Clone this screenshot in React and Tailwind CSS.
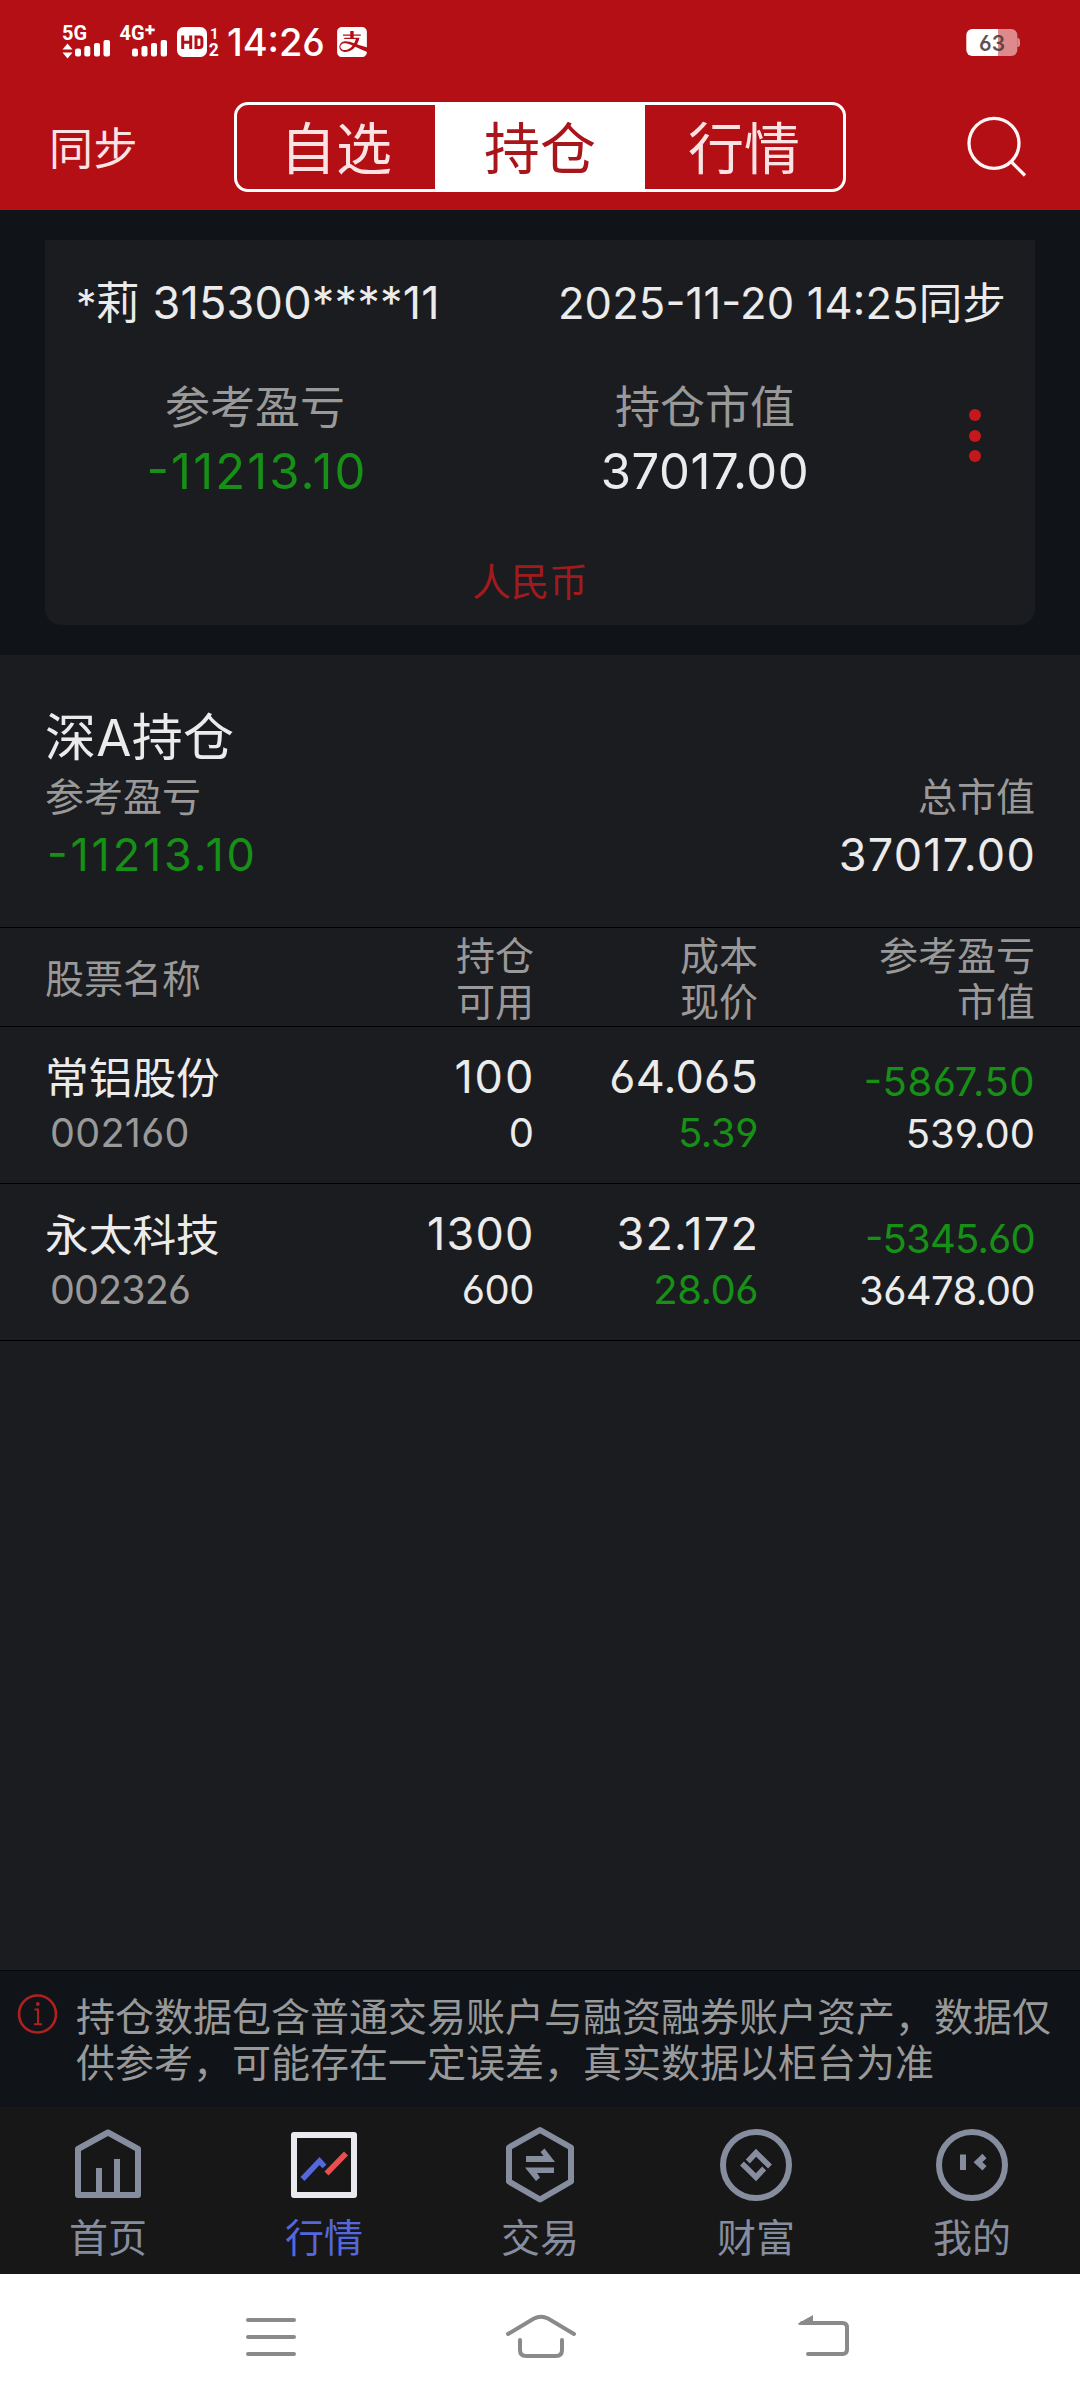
import { SiAlipay } from "react-icons/si";

const holdings = [
  {
    name: "常铝股份",
    code: "002160",
    codeClass: "tracking-[0.3px]",
    amount: "100",
    amountClass: "tracking-[1.9px] -mr-[1.2px]",
    usable: "0",
    usableClass: "",
    cost: "64.065",
    costClass: "tracking-[0.2px]",
    price: "5.39",
    priceClass: "tracking-[-0.4px]",
    profit: "-5867.50",
    profitClass: "tracking-[0.5px]",
    value: "539.00",
    valueClass: "",
  },
  {
    name: "永太科技",
    code: "002326",
    codeClass: "tracking-[-0.9px]",
    amount: "1300",
    amountClass: "tracking-[1.2px] -mr-[0.6px]",
    usable: "600",
    usableClass: "tracking-[-0.5px]",
    cost: "32.172",
    costClass: "tracking-[1.2px] -mr-[1.2px]",
    price: "28.06",
    priceClass: "tracking-[-0.5px]",
    profit: "-5345.60",
    profitClass: "tracking-[-0.8px]",
    value: "36478.00",
    valueClass: "tracking-[-0.6px]",
  },
];

const LABEL = "text-[39px] text-[#999999]";

function SignalIcon() {
  return (
    <svg className="overflow-visible" width="114" height="40" viewBox="60 22 114 40" fill="#fff" fontFamily="Roboto, sans-serif" fontWeight="700">
      <text x="62" y="39.5" fontSize="20" textLength="25" lengthAdjust="spacingAndGlyphs">5G</text>
      <path d="M67.5 43.5l5 6h-10zM67.5 58.5l5-6h-10z" />
      <rect x="75" y="48.5" width="6" height="8" rx="2" />
      <rect x="84.3" y="46" width="6" height="10.5" rx="2" />
      <rect x="94" y="43" width="6" height="13.5" rx="2" />
      <rect x="103.5" y="40" width="6.5" height="16.5" rx="2" />
      <text x="119.5" y="39.5" fontSize="20" textLength="25" lengthAdjust="spacingAndGlyphs">4G</text>
      <path d="M148.600 25h2.800v3.400h3.300v2.800h-3.300v3.400h-2.800v-3.400h-3.300v-2.800h3.300z" />
      <rect x="132" y="48.5" width="6" height="8" rx="2" />
      <rect x="141.5" y="46" width="6" height="10.5" rx="2" />
      <rect x="151" y="43" width="6" height="13.5" rx="2" />
      <rect x="160.7" y="40" width="6.3" height="16.5" rx="2" />
    </svg>
  );
}

function HdIcon() {
  return (
    <svg className="overflow-visible" width="44" height="32" viewBox="176 26 44 32">
      <rect x="177" y="27" width="30" height="30" rx="6.5" fill="#fff" />
      <path d="M182.700 35.500v13.500M190.700 35.500v13.500M183 42.200h8" stroke="#b40f14" strokeWidth="3" fill="none" />
      <path d="M196 37h3.500q2.400 0 2.400 2.400v5.700q0 2.400-2.400 2.400h-3.500z" stroke="#b40f14" strokeWidth="3" fill="none" />
      <text x="210" y="38.5" fontFamily="Roboto, sans-serif" fontWeight="700" fontSize="15" fill="#fff">1</text>
      <text x="208.7" y="56.3" fontFamily="Roboto, sans-serif" fontWeight="700" fontSize="17.5" fill="#fff">2</text>
    </svg>
  );
}

function BatteryIcon() {
  return (
    <svg width="54" height="28" viewBox="966 29 54 28">
      <defs>
        <clipPath id="battery-body">
          <rect x="966.3" y="29" width="51" height="27" rx="6" />
        </clipPath>
      </defs>
      <path d="M1017.300 38h1.200q1.500 1 1.500 2.500v4q0 1.500-1.500 2.500h-1.200z" fill="#de8a8d" />
      <g clipPath="url(#battery-body)">
        <rect x="966" y="29" width="32" height="27" fill="#fff" />
        <rect x="998" y="29" width="20" height="27" fill="#de8a8d" />
      </g>
      <text x="979" y="51" fontFamily="Inter, sans-serif" fontWeight="600" fontSize="21.5" textLength="26" lengthAdjust="spacingAndGlyphs" fill="#4a3a3a" fillOpacity="0.88">63</text>
    </svg>
  );
}

function StatusBar() {
  return (
    <div className="flex h-[84px] items-center px-[60px]">
      <SignalIcon />
      <div className="ml-[2px] flex">
        <HdIcon />
      </div>
      <span className="ml-[7px] w-[101px] whitespace-nowrap text-[38px] font-medium leading-[40px] tracking-[-0.1px]">14:26</span>
      <SiAlipay className="ml-[8.500px] h-[30px] w-[30px]" />
      <div className="ml-auto pt-[1px]">
        <BatteryIcon />
      </div>
    </div>
  );
}

function TopBar() {
  return (
    <div className="flex h-[126px] items-start pt-[18px] text-[#fbe3e4]">
      <div className="w-[234px] pl-[49px] text-[44px] leading-[95px] tracking-[0.5px]">同步</div>
      <div className="flex h-[90px] w-[612px] overflow-hidden rounded-[14px] border-[3px] border-white text-center text-[56px] leading-[89px]">
        <div className="w-[198px]">自选</div>
        <div className="w-[210px] bg-white text-[#a8151a]">持仓</div>
        <div className="w-[198px]">行情</div>
      </div>
      <svg className="ml-[119px] mt-[12px]" width="64" height="64" viewBox="965 114 64 64" fill="none" stroke="#fff5f5" strokeWidth="3.300">
        <circle cx="994" cy="143.300" r="25" />
        <path d="M1011 161.500l14 14" />
      </svg>
    </div>
  );
}

function AccountCard() {
  return (
    <div className="h-[445px] bg-[#101418] px-[45px] pt-[30px]">
      <div className="h-[385px] rounded-b-[16px] bg-[#1b1c1f]">
        <div className="flex h-[93px] justify-between pl-[31px] pr-[29px] pt-[33px] text-[44px] leading-[60px]">
          <span className="whitespace-pre [font-feature-settings:'cv03','cv04']">
            <span className="text-[41px] tracking-[-1px]">*</span>
            <span className="text-[44px]">莉</span>
            <span className="pl-[13px] text-[45px] tracking-[0.200px]">315300****11</span>
          </span>
          <span className="text-[43.500px] tracking-[0.150px]">2025-11-20 14:25同步</span>
        </div>
        <div className="flex pt-[43px]">
          <div className="w-[424px] text-center">
            <div className="-ml-[4px] text-[45px] leading-[64px] text-[#999999]">参考盈亏</div>
            <div className="text-[49px] leading-[64px] tracking-[2.100px] text-[#169016]">-11213.10</div>
          </div>
          <div className="w-[472px] text-center">
            <div className="text-[45px] leading-[64px] text-[#999999]">持仓市值</div>
            <div className="text-[49px] leading-[64px] tracking-[0.500px]">37017.00</div>
          </div>
          <div className="flex flex-col items-center gap-[8.500px] pl-[28px] pt-[33px]">
            <div className="h-[12px] w-[12px] rounded-full bg-[#c5181c]" />
            <div className="h-[12px] w-[12px] rounded-full bg-[#c5181c]" />
            <div className="h-[12px] w-[12px] rounded-full bg-[#c5181c]" />
          </div>
        </div>
        <div className="pr-[20px] pt-[48px] text-center text-[38.500px] leading-[60px] text-[#a01a1e]">人民币</div>
      </div>
    </div>
  );
}

function MarketSummary() {
  return (
    <div className="h-[273px] border-b border-black px-[45px] pt-[51px]">
      <div className="text-[51px] leading-[64px] tracking-[0.300px]">深A持仓</div>
      <div className={`flex justify-between leading-[54px] ${LABEL}`}>
        <span>参考盈亏</span>
        <span>总市值</span>
      </div>
      <div className="flex justify-between pl-[2px] text-[45px] leading-[61px]">
        <span className="tracking-[2.800px] text-[#169016]">-11213.10</span>
        <span className="-mr-[1px] tracking-[1.200px]">37017.00</span>
      </div>
    </div>
  );
}

const COLS = "grid grid-cols-[289px_200px_224px_277px] px-[45px]";

function HoldingsTable() {
  return (
    <div>
      <div className={`${COLS} h-[99px] border-b border-black pt-[5px] text-right leading-[46px] ${LABEL}`}>
        <div className="text-left leading-[92px]">股票名称</div>
        <div>持仓<br />可用</div>
        <div>成本<br />现价</div>
        <div>参考盈亏<br />市值</div>
      </div>
      {holdings.map((h) => (
        <div key={h.code} className={`${COLS} h-[157px] border-b border-black text-right text-[45px]`}>
          <div className="pt-[24px] text-left leading-[55px]">
            <div className="text-[43.700px]">{h.name}</div>
            <div className={`pl-[5px] text-[39.500px] text-[#999999] ${h.codeClass}`}>{h.code}</div>
          </div>
          <div className="pt-[22px] leading-[56px]">
            <div className={h.amountClass}>{h.amount}</div>
            <div className={`text-[40px] ${h.usableClass}`}>{h.usable}</div>
          </div>
          <div className="pt-[22px] leading-[56px]">
            <div className={h.costClass}>{h.cost}</div>
            <div className={`text-[40px] text-[#169016] ${h.priceClass}`}>{h.price}</div>
          </div>
          <div className="pt-[29px] text-[40px] leading-[52px]">
            <div className={`text-[#169016] ${h.profitClass}`}>{h.profit}</div>
            <div className={h.valueClass}>{h.value}</div>
          </div>
        </div>
      ))}
    </div>
  );
}

function Notice() {
  return (
    <div className="flex h-[137px] border-t border-[#08090b] bg-[#101418] pt-[23px]">
      <svg className="ml-[16px] mt-[-2px] shrink-0" width="44" height="44" viewBox="0 0 44 44" fill="none" stroke="#b0201f">
        <circle cx="21.500" cy="22" r="18.500" strokeWidth="2.600" />
        <circle cx="21.800" cy="12" r="1.900" fill="#b0201f" stroke="none" />
        <path d="M18.500 17.500h3.500v14.500M18 32.300h8" strokeWidth="2" />
      </svg>
      <div className="ml-[16px] whitespace-nowrap text-[39px] leading-[46px] text-[#999999]">
        持仓数据包含普通交易账户与融资融券账户资产，数据仅
        <br />
        供参考，可能存在一定误差，真实数据以柜台为准
      </div>
    </div>
  );
}

function NavIcon({ children }) {
  return (
    <svg width="80" height="84" viewBox="0 0 80 84" fill="none" stroke="#868d9e" strokeWidth="6" strokeLinejoin="round">
      {children}
    </svg>
  );
}

const tabs = [
  {
    label: "首页",
    icon: (
      <NavIcon>
        <path d="M10 72V26L40 9.500l30 16.500V72z" />
        <path d="M31 72V45M49 72V36" />
      </NavIcon>
    ),
  },
  {
    label: "行情",
    active: true,
    icon: (
      <NavIcon>
        <rect x="10" y="12" width="60" height="60" stroke="#e9eaee" />
        <path d="M18.500 56L35.500 38L40.500 43.500" stroke="#5567dd" strokeWidth="5.500" strokeLinejoin="miter" />
        <path d="M42.500 50.500L62 30.500" stroke="#e85050" strokeWidth="5.500" />
      </NavIcon>
    ),
  },
  {
    label: "交易",
    icon: (
      <NavIcon>
        <path d="M40 7L71 24.500V58.500L40 76.500L9 58.500V24.500z" />
        <path d="M26 33h17.500l-3-4 4-3.500L55 39H26zM54 50H37l3 4.500-4 3.500L25 44.500H54z" fill="#868d9e" stroke="none" />
      </NavIcon>
    ),
  },
  {
    label: "财富",
    icon: (
      <NavIcon>
        <circle cx="40" cy="42" r="33" />
        <path d="M31.800 38.500L40 29.800L54 43.500M48.200 45.500L40 54.200L26 40.500" strokeLinejoin="miter" strokeWidth="5.500" />
      </NavIcon>
    ),
  },
  {
    label: "我的",
    icon: (
      <NavIcon>
        <circle cx="40" cy="42" r="33" />
        <path d="M31 31.500v15.500M52.500 33L46 39.200l6.500 6" strokeLinejoin="miter" />
      </NavIcon>
    ),
  },
];

function TabBar() {
  return (
    <div className="grid h-[167px] grid-cols-5 bg-[#171717] pt-[16px] text-[39px] leading-[62px] text-[#868d9e]">
      {tabs.map((t) => (
        <div key={t.label} className="flex flex-col items-center">
          {t.icon}
          <span className={t.active ? "text-[#5567dd]" : ""}>{t.label}</span>
        </div>
      ))}
    </div>
  );
}

function SystemNav() {
  return (
    <div className="flex h-[126px] bg-white pl-[236px] pt-[31px]">
      <svg width="70" height="60" viewBox="236 2305 70 60" stroke="#8a8a8a" strokeWidth="4" strokeLinecap="round">
        <path d="M248 2320h46M248 2337h46M248 2354h46" />
      </svg>
      <svg className="ml-[194px]" width="80" height="60" viewBox="500 2305 80 60" fill="none" stroke="#8a8a8a" strokeWidth="4" strokeLinecap="round">
        <path d="M508 2334L534 2318.500Q541 2315 548 2318.500L574 2334" />
        <path d="M520 2340v10q0 6 6 6h30q6 0 6-6v-10" />
      </svg>
      <svg className="ml-[210px]" width="70" height="60" viewBox="790 2305 70 60" fill="none" stroke="#8a8a8a" strokeWidth="4" strokeLinecap="round">
        <path d="M802 2323H842.500q4.500 0 4.500 4.500v22q0 4.500-4.500 4.500H808" />
        <path d="M798 2323.500L813 2315v9.500L799 2325z" fill="#8a8a8a" stroke="none" />
      </svg>
    </div>
  );
}

export default function App() {
  return (
    <div className="flex h-[2400px] w-[1080px] flex-col overflow-hidden bg-[#1b1c1f] text-[#ebebeb] [font-family:Inter,'Noto_Sans_CJK_SC',sans-serif] [font-feature-settings:'cv03','cv04','case']">
      <header className="bg-[#b40f14] text-white">
        <StatusBar />
        <TopBar />
      </header>
      <AccountCard />
      <main className="grow">
        <MarketSummary />
        <HoldingsTable />
      </main>
      <Notice />
      <TabBar />
      <SystemNav />
    </div>
  );
}
